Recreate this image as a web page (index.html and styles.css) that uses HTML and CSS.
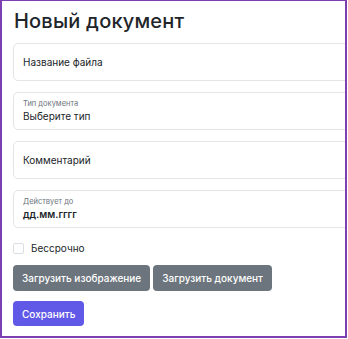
FILE: index.html
```html
<!DOCTYPE html>
<html lang="ru">
<head>
<meta charset="UTF-8">
<meta name="viewport" content="width=device-width, initial-scale=1.0">
<title>Новый документ</title>
<link rel="stylesheet" href="styles.css">
</head>
<body>
    <div class="frame">
        <h1>Новый документ</h1>

        <div class="field">
            <span class="value">Название файла</span>
        </div>

        <div class="field">
            <span class="label">Тип документа</span>
            <span class="value">Выберите тип</span>
        </div>

        <div class="field">
            <span class="value">Комментарий</span>
        </div>

        <div class="field">
            <span class="label">Действует до</span>
            <span class="value date">дд.мм.гггг</span>
        </div>

        <label class="check">
            <span class="box"></span>
            Бессрочно
        </label>

        <div class="uploads">
            <button class="btn btn-gray">Загрузить изображение</button>
            <button class="btn btn-gray">Загрузить документ</button>
        </div>

        <button class="btn btn-save">Сохранить</button>
    </div>
</body>
</html>
```

FILE: styles.css
```css
body {
    margin: 0;
    font-family: Inter, "Noto Sans", sans-serif;
    color: #212529;
    background-color: #fff;
}

.frame {
    width: 347px;
    height: 338px;
    box-sizing: border-box;
    border: 2px solid #7b3fb2;
    border-top-width: 1px;
    padding-left: 11px;
    overflow: hidden;
    background-color: #fff;
}

h1 {
    margin: 6px 0 7px 1px;
    font-size: 20px;
    font-weight: 500;
    line-height: 29px;
    letter-spacing: 0.2px;
}

.field {
    width: 420px;
    height: 38px;
    box-sizing: border-box;
    border: 1px solid #e3e5e8;
    border-radius: 5px;
    margin-bottom: 11px;
    padding: 0 9px;
    display: flex;
    flex-direction: column;
    justify-content: center;
}

.label {
    font-size: 7.5px;
    line-height: 10px;
    color: #6c757d;
}

.value {
    font-size: 10px;
    line-height: 14px;
}

.value.date {
    font-weight: 600;
}

.check {
    display: flex;
    align-items: center;
    gap: 7px;
    font-size: 10px;
    margin: 14px 0 11px;
}

.box {
    width: 9px;
    height: 9px;
    border: 1px solid #dadde1;
    border-radius: 2px;
}

.uploads {
    display: flex;
    gap: 3px;
    margin-bottom: 10px;
}

.btn {
    font-family: inherit;
    font-size: 10px;
    font-weight: 500;
    color: #fff;
    border: none;
    border-radius: 4px;
    height: 26px;
    padding: 0 9px;
}

.btn-gray {
    background-color: #6c757d;
}

.btn-save {
    background-color: #6058e6;
    height: 25px;
}
```
